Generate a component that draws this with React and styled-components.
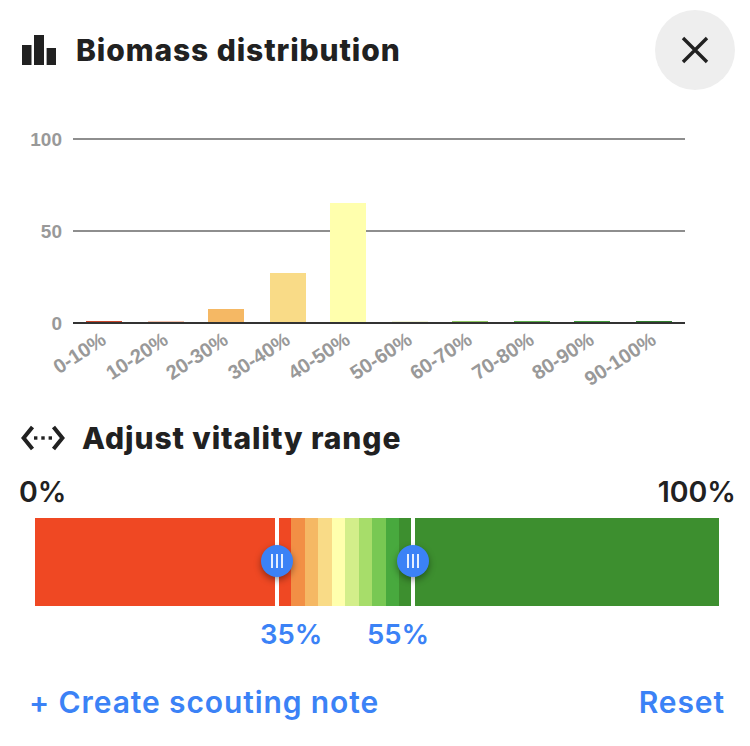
import React from "react";
import styled, { createGlobalStyle } from "styled-components";

const GlobalStyle = createGlobalStyle`
  body {
    margin: 0;
    background: #fff;
    font-family: Inter, "Liberation Sans", sans-serif;
    color: #212121;
  }
`;

const Panel = styled.div`
  width: 750px;
  height: 746px;
  overflow: hidden;
  display: flex;
  flex-direction: column;
`;

const Header = styled.div`
  display: flex;
  align-items: center;
  justify-content: space-between;
  padding: 10px 15px 0 22px;
`;

const TitleRow = styled.div`
  display: flex;
  align-items: center;
  gap: ${(p) => p.$gap}px;
`;

const Title = styled.h2`
  margin: 0;
  font-size: 30px;
  line-height: 36px;
  font-weight: 800;
  letter-spacing: 0.9px;
  white-space: nowrap;
`;

const CloseButton = styled.button`
  width: 80px;
  height: 80px;
  border: 0;
  padding: 0;
  border-radius: 50%;
  background: #eee;
  display: flex;
  align-items: center;
  justify-content: center;
`;

const ChartSvg = styled.svg`
  display: block;
  margin-top: 30px;
  width: 750px;
  height: 270px;
  flex: none;
`;

const AxisLabel = styled.text`
  font-family: "Liberation Sans", Arial, sans-serif;
  font-weight: 700;
  font-size: ${(p) => p.$size}px;
  fill: #999;
`;

const RangeSection = styled.div`
  margin-top: 30px;
  padding-left: 21px;
`;

const EndLabels = styled.div`
  display: flex;
  justify-content: space-between;
  padding: 18px 14px 0 19px;
  font-size: 28.5px;
  line-height: 36px;
  font-weight: 600;
`;

const TrackWrap = styled.div`
  position: relative;
  margin: 8px 31px 0 35px;
  height: 88px;
  display: flex;
`;

const Segment = styled.div`
  height: 100%;
  width: ${(p) => p.$w}px;
  background: ${(p) => p.$c};
`;

const HandleLine = styled.div`
  position: absolute;
  top: 0;
  bottom: 0;
  left: ${(p) => p.$x - 2}px;
  width: 4px;
  background: #fff;
`;

const Handle = styled.div`
  position: absolute;
  top: 27px;
  left: ${(p) => p.$x - 16}px;
  width: 32px;
  height: 32px;
  border-radius: 50%;
  background: #3b82f6;
  box-shadow: 0 3px 7px rgba(0, 0, 0, 0.4);
  display: flex;
  align-items: center;
  justify-content: center;
  gap: 3.5px;
`;

const Grip = styled.span`
  width: 1.5px;
  height: 14px;
  background: #e4eefe;
`;

const Values = styled.div`
  position: relative;
  height: 36px;
  margin-top: 10px;
`;

const Value = styled.span`
  position: absolute;
  left: ${(p) => p.$x}px;
  top: 0;
  color: #3b82f6;
  font-size: 27.5px;
  line-height: 36px;
  font-weight: 600;
`;

const Footer = styled.div`
  display: flex;
  justify-content: space-between;
  padding: 32px 25px 0 29px;
`;

const LinkButton = styled.a`
  color: #3b82f6;
  font-size: 30px;
  line-height: 36px;
  font-weight: 600;
  letter-spacing: 0.9px;
  white-space: nowrap;
`;

const gridLines = [
  { y: 19, label: "100" },
  { y: 111, label: "50" },
  { y: 203, label: "0" },
];

const bars = [
  { label: "0-10%", x: 86, h: 1, c: "#c8452a" },
  { label: "10-20%", x: 148, h: 1, c: "#f3c3ae" },
  { label: "20-30%", x: 208, h: 13, c: "#f5b864" },
  { label: "30-40%", x: 270, h: 49, c: "#f9db87" },
  { label: "40-50%", x: 330, h: 119, c: "#ffffad" },
  { label: "50-60%", x: 392, h: 0.5, c: "#e5e8b0" },
  { label: "60-70%", x: 452, h: 1, c: "#8fc860" },
  { label: "70-80%", x: 514, h: 1, c: "#5cb04a" },
  { label: "80-90%", x: 574, h: 1, c: "#3f9a38" },
  { label: "90-100%", x: 636, h: 1, c: "#2f7f2c" },
];

const segments = [
  { w: 256, c: "#ef4823" },
  { w: 14, c: "#f28f45" },
  { w: 13, c: "#f5b864" },
  { w: 14, c: "#f9db87" },
  { w: 13, c: "#ffffad" },
  { w: 14, c: "#d3ee8a" },
  { w: 13, c: "#a7dd6a" },
  { w: 14, c: "#78c853" },
  { w: 13, c: "#48a93e" },
  { w: 320, c: "#3d8f2f" },
];

const BarsIcon = () => (
  <svg width="34" height="30" viewBox="0 0 34 30" fill="#212121">
    <rect x="0" y="10" width="9.5" height="20" />
    <rect x="12" y="0" width="10" height="30" />
    <rect x="24.6" y="13" width="9.4" height="17" />
  </svg>
);

const RangeIcon = () => (
  <svg width="44" height="26" viewBox="0 0 44 26" fill="none" stroke="#212121" strokeWidth="4">
    <path d="M11.5 2 L2.6 13 L11.5 24" />
    <path d="M32.5 2 L41.4 13 L32.5 24" />
    <g fill="#212121" stroke="none">
      <rect x="13" y="11.3" width="3.4" height="3.4" />
      <rect x="20.3" y="11.3" width="3.4" height="3.4" />
      <rect x="27.6" y="11.3" width="3.4" height="3.4" />
    </g>
  </svg>
);

const App = () => {
  return (
    <Panel>
      <GlobalStyle />
      <Header>
        <TitleRow $gap={20}>
          <BarsIcon />
          <Title>Biomass distribution</Title>
        </TitleRow>
        <CloseButton aria-label="Close">
          <svg width="30" height="30" viewBox="0 0 30 30" stroke="#212121" strokeWidth="3.4">
            <path d="M3 3 L27 27 M27 3 L3 27" />
          </svg>
        </CloseButton>
      </Header>

      <ChartSvg viewBox="0 120 750 270">
        <g transform="translate(0 120)">
          {gridLines.map((g) => (
            <g key={g.label}>
              <line x1="73" x2="685" y1={g.y} y2={g.y} stroke={g.y === 203 ? "#333" : "#8e8e8e"} strokeWidth={g.y === 203 ? 2 : 1.8} />
              <AxisLabel $size={19} x="62" y={g.y + 7} textAnchor="end">{g.label}</AxisLabel>
            </g>
          ))}
          {bars.map((b) => (
            <rect key={b.label} x={b.x} y={202 - b.h} width="36" height={b.h} fill={b.c} />
          ))}
          {bars.map((b) => (
            <AxisLabel $size={20} key={b.label} textAnchor="end" transform={`translate(${b.x + 21.5} 223) rotate(-33)`}>
              {b.label}
            </AxisLabel>
          ))}
        </g>
      </ChartSvg>

      <RangeSection>
        <TitleRow $gap={17}>
          <RangeIcon />
          <Title>Adjust vitality range</Title>
        </TitleRow>
      </RangeSection>

      <EndLabels>
        <span>0%</span>
        <span>100%</span>
      </EndLabels>

      <TrackWrap>
        {segments.map((s) => (
          <Segment key={s.c} $w={s.w} $c={s.c} />
        ))}
        <HandleLine $x={242} />
        <HandleLine $x={378} />
        <Handle $x={242}><Grip /><Grip /><Grip /></Handle>
        <Handle $x={378}><Grip /><Grip /><Grip /></Handle>
      </TrackWrap>

      <Values>
        <Value $x={260}>35%</Value>
        <Value $x={367}>55%</Value>
      </Values>

      <Footer>
        <LinkButton>+ Create scouting note</LinkButton>
        <LinkButton>Reset</LinkButton>
      </Footer>
    </Panel>
  );
};

export default App;
